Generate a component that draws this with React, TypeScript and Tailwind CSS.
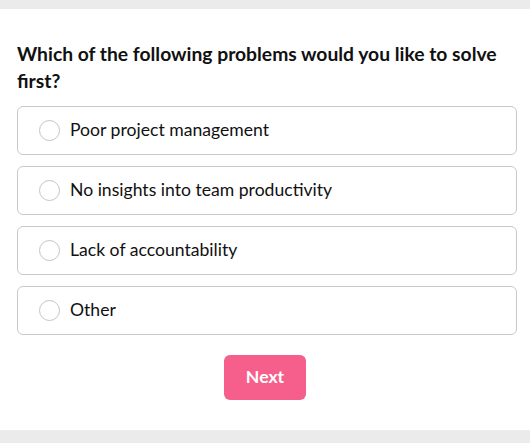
import React, { useState } from 'react';

const options = [
  'Poor project management',
  'No insights into team productivity',
  'Lack of accountability',
  'Other',
];

const App: React.FC = () => {
  const [selected, setSelected] = useState<number | null>(null);

  return (
    <div className="w-[530px] h-[443px] bg-white flex flex-col" style={{ fontFamily: 'Lato, "Open Sans", sans-serif' }}>
      <div className="h-[9px] bg-[#ebebeb]" />
      <div className="flex-1 px-[17px] pt-[31px]">
        <h1 className="text-[19.3px] leading-[27px] font-bold text-[#111]">
          Which of the following problems would you like to solve first?
        </h1>

        <div className="mt-[12px] flex flex-col gap-[11px] w-[500px]">
          {options.map((opt, i) => (
            <button
              key={opt}
              onClick={() => setSelected(i)}
              className="h-[49px] flex items-center gap-[10px] pl-[21px] border-[1.5px] border-[#c9c9c9] rounded-[6px] bg-white text-left"
            >
              <span className="w-[21px] h-[21px] rounded-full border-[1.5px] border-[#c4c4c4] flex items-center justify-center">
                {selected === i && <span className="w-[11px] h-[11px] rounded-full bg-[#f55f8a]" />}
              </span>
              <span className="text-[17.6px] text-[#111]">{opt}</span>
            </button>
          ))}
        </div>

        <div className="flex justify-center mt-[20px]">
          <button className="w-[82px] h-[45px] rounded-[6px] bg-[#f65f8b] text-white font-bold text-[17.6px]">
            Next
          </button>
        </div>
      </div>
      <div className="h-[13px] bg-[#ebebeb]" />
    </div>
  );
};

export default App;
